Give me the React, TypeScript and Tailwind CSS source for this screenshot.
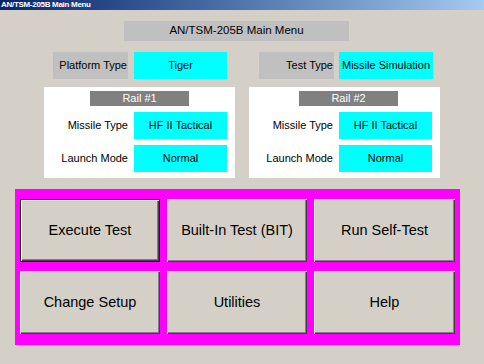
import React from "react";

const font = { fontFamily: '"Liberation Sans", Arial, sans-serif' };

function Rail({ title, headerShift }: { title: string; headerShift: string }) {
  return (
    <div className="w-[191px] h-[91px] bg-white flex flex-col pt-[4px]">
      <div className={`h-[15px] w-[99px] bg-[#808080] text-white text-[11px] leading-[15px] text-center ${headerShift}`}>
        {title}
      </div>
      <div className="flex items-center mt-[6px]">
        <div className="w-[84px] text-right text-[11px] text-black">Missile Type</div>
        <div className="ml-[6px] w-[93px] h-[27px] bg-[#00ffff] flex items-center justify-center text-[11px] text-black">
          HF II Tactical
        </div>
      </div>
      <div className="flex items-center mt-[6px]">
        <div className="w-[84px] text-right text-[11px] text-black">Launch Mode</div>
        <div className="ml-[6px] w-[93px] h-[27px] bg-[#00ffff] flex items-center justify-center text-[11px] text-black">
          Normal
        </div>
      </div>
    </div>
  );
}

function Btn({ label, def }: { label: string; def?: boolean }) {
  return (
    <div
      className={
        def
          ? "h-[63px] bg-[#d4d0c8] flex items-center justify-center text-[14.5px] text-black border border-[#202020] shadow-[inset_1px_1px_0_#fff,inset_-1px_-1px_0_#404040,inset_-2px_-2px_0_#808080]"
          : "h-[63px] bg-[#d4d0c8] flex items-center justify-center text-[14.5px] text-black shadow-[inset_1px_1px_0_#fff,inset_-1px_-1px_0_#404040,inset_-2px_-2px_0_#808080]"
      }
    >
      {label}
    </div>
  );
}

export default function App() {
  return (
    <div className="w-[484px] h-[364px] bg-[#d4d0c8] overflow-hidden flex flex-col" style={font}>
      <div className="h-[10px] bg-gradient-to-r from-[#0a246a] to-[#a6caf0] flex items-center pl-[1px]">
        <span className="text-white font-bold text-[8px] leading-[10px] tracking-[-0.3px]">AN/TSM-205B Main Menu</span>
      </div>

      <div className="mt-[11px] ml-[124px] w-[225px] h-[20px] bg-[#c0c0c0] flex items-center justify-center text-[11.5px] text-black">
        AN/TSM-205B Main Menu
      </div>

      <div className="mt-[11px] flex items-center">
        <div className="ml-[53px] w-[75px] h-[27px] bg-[#c0c0c0] flex items-center justify-end pr-[1px] text-[11px] text-black">
          Platform Type
        </div>
        <div className="ml-[6px] w-[93px] h-[27px] bg-[#00ffff] flex items-center justify-center text-[11px] text-black">
          Tiger
        </div>
        <div className="ml-[32px] w-[75px] h-[27px] bg-[#c0c0c0] flex items-center justify-end pr-[1px] text-[11px] text-black">
          Test Type
        </div>
        <div className="ml-[5px] w-[94px] h-[27px] bg-[#00ffff] flex items-center justify-center text-[11px] text-black">
          Missile Simulation
        </div>
      </div>

      <div className="mt-[8px] flex">
        <div className="ml-[44px]">
          <Rail title="Rail #1" headerShift="ml-[46px]" />
        </div>
        <div className="ml-[14px]">
          <Rail title="Rail #2" headerShift="ml-[50px]" />
        </div>
      </div>

      <div className="mt-[11px] ml-[15px] w-[445px] h-[156px] bg-[#ff00ff] pt-[10px] pl-[5px] pr-[5px]">
        <div className="grid grid-cols-[140px_140px_141px] gap-x-[7px] gap-y-[9px]">
          <Btn label="Execute Test" def />
          <Btn label="Built-In Test (BIT)" />
          <Btn label="Run Self-Test" />
          <Btn label="Change Setup" />
          <Btn label="Utilities" />
          <Btn label="Help" />
        </div>
      </div>
    </div>
  );
}
